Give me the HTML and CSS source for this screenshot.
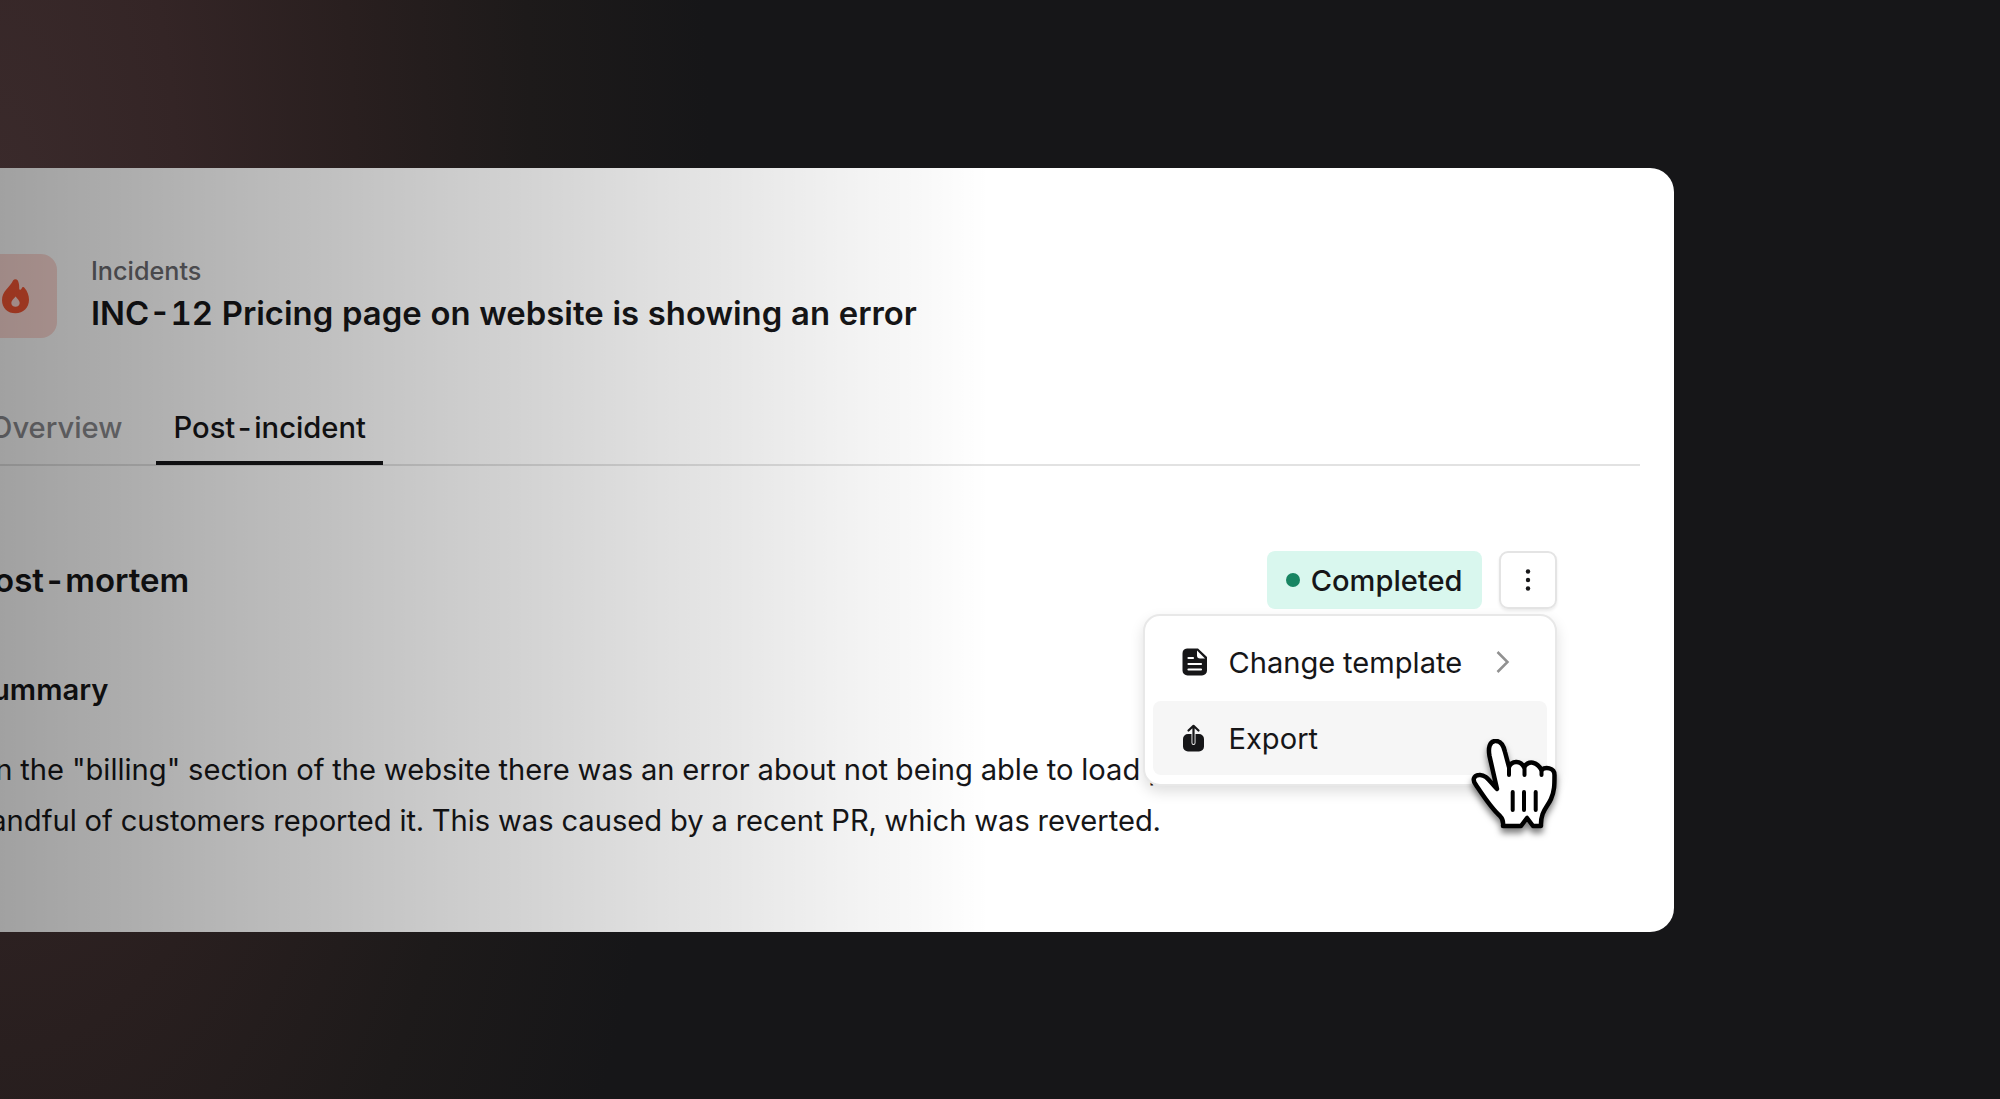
FILE: index.html
```
<!DOCTYPE html>
<html lang="en">
<head>
    <meta charset="UTF-8">
    <meta name="viewport" content="width=device-width, initial-scale=1.0">
    <title>INC-12 Pricing page on website is showing an error</title>
    <link rel="stylesheet" href="styles.css">
</head>
<body>
    <div class="card">
        <div class="header">
            <div class="header-icon">
                <svg width="27" height="35" viewBox="0 0 27 35" fill="#f25533">
                    <path fill-rule="evenodd" d="M11.2 1.2C12.3-.2 14.6-.1 15.8 1.4C16.9 3.4 17.3 6.200 17.200 9.400C17.200 10.800 18.700 11.100 19.300 10.100L20.200 8.500C21 7.800 22 8.100 22.600 8.900C25.400 12 27 16.200 27 20.800C27 28.600 21.300 34.300 13.500 34.300C5.700 34.300 0 28.900 0 21.200C0 16.800 1.800 13.600 4.300 10.600C7 7.400 9.500 4.800 11.200 1.200ZM13.600 17.600C12.100 19.300 9.300 21.800 9.300 24C9.300 26.200 11.200 27.700 13.500 27.700C15.800 27.700 17.700 26.200 17.700 24C17.700 21.800 15 19.300 13.600 17.600Z"/>
                </svg>
            </div>
            <div class="header-text">
                <div class="breadcrumb">Incidents</div>
                <h1>INC-12 Pricing page on website is showing an error</h1>
            </div>
        </div>

        <div class="tabs">
            <div class="tab">Overview</div>
            <div class="tab active">Post-incident</div>
        </div>

        <div class="content">
            <div class="title-row">
                <h2>Post-mortem</h2>
                <div class="actions">
                    <div class="badge"><span class="dot"></span>Completed</div>
                    <div class="more-btn">
                        <svg width="6" height="22" viewBox="0 0 6 22" fill="#161618">
                            <circle cx="3" cy="2.500" r="2.200"/>
                            <circle cx="3" cy="11" r="2.200"/>
                            <circle cx="3" cy="19.500" r="2.200"/>
                        </svg>
                    </div>
                    <div class="menu">
                        <div class="menu-item">
                            <svg class="menu-icon" width="26" height="28" viewBox="0 0 26 28">
                                <path fill="#161618" d="M5 .5H16L25 9V22.500A5 5 0 0 1 20 27.500H5.500A5 5 0 0 1 .5 22.500V5.500A5 5 0 0 1 5 .5Z"/>
                                <path fill="#fff" d="M15 2.500L23 10.500H18A3 3 0 0 1 15 7.500Z"/>
                                <path stroke="#fff" stroke-width="2.200" stroke-linecap="round" d="M6.500 10H11M6.500 16H19M6.500 21.500H19"/>
                            </svg>
                            Change template
                            <svg class="chevron" width="14" height="24" viewBox="0 0 14 24" fill="none" stroke="#919191" stroke-width="2.500">
                                <path d="M1.500 2L11.500 12L1.500 22"/>
                            </svg>
                        </div>
                        <div class="menu-item active">
                            <svg class="menu-icon" width="26" height="28" viewBox="0 0 26 28">
                                <path fill="#161618" d="M6 10H9.500V19A2 2 0 0 0 13.500 19V10H17A5 5 0 0 1 22 15V22.500A5 5 0 0 1 17 27.500H6A5 5 0 0 1 1 22.500V15A5 5 0 0 1 6 10Z"/>
                                <path fill="none" stroke="#161618" stroke-width="2.200" stroke-linecap="round" stroke-linejoin="round" d="M11.500 19V2M6.500 6.500L11.500 1.800L16.500 6.500"/>
                            </svg>
                            Export
                        </div>
                        <svg class="cursor" width="90" height="102" viewBox="0 0 90 102">
                            <path fill="#fff" stroke="#000" stroke-width="4.500" stroke-linejoin="round" d="M26 50L18.500 17C17 9 18.500 2.500 24 2C30 1.500 32.500 6 34 13L38 28C41 20.500 50 22 53 28C58 21 66 22.500 70.500 31C74 28 83.500 28 83.500 36C83.500 46 83.500 52 80 60C76 69 69.500 72 70 87H62L56 79L50 87H32C32.500 83 32 80 29 77C20 69 13 58 5 46C1 41 2.500 36.500 8 36C15 35 19 43 26 50Z"/>
                            <path fill="none" stroke="#000" stroke-width="4" stroke-linecap="round" d="M38 28V36M53.500 28V36M70.500 31V36M41.700 53V71M53 53V71M64.700 53V71"/>
                        </svg>
                    </div>
                </div>
            </div>
            <h3>Summary</h3>
            <p>On the "billing" section of the website there was an error about not being able to load prices. A<br>handful of customers reported it. This was caused by a recent PR, which was reverted.</p>
        </div>
    </div>
</body>
</html>
```
FILE: styles.css
```
* { margin: 0; padding: 0; box-sizing: border-box; }
body {
    height: 1099px;
    padding-top: 168px;
    overflow: hidden;
    font-family: Inter, "Liberation Sans", sans-serif;
    font-variant-numeric: tabular-nums;
    color: #161618;
    background: radial-gradient(ellipse 710px 1700px at 0 200px, #3a2a2b 0%, #342526 25%, #291f1f 50%, #1d1a1a 75%, #161618 100%) #161618;
}
.card {
    position: relative;
    width: 1773.5px;
    height: 764px;
    margin-left: -100px;
    padding: 86px 34px 0 73px;
    background: #fff;
    border-radius: 24px;
}
/* fades the left half of the card into the dark background */
.card::after {
    content: "";
    position: absolute;
    top: 0;
    bottom: 0;
    left: 100px;
    width: 990px;
    background: linear-gradient(to right, rgba(0, 0, 0, 0.37), rgba(0, 0, 0, 0));
}

.header { display: flex; align-items: center; gap: 34px; height: 84px; }
.header-icon { display: flex; align-items: center; justify-content: center; width: 84px; height: 84px; background: #fcd9d4; border-radius: 16px; }
.breadcrumb { font-size: 25.2px; line-height: 34px; font-weight: 500; color: #6a6a6f; }
h1 { font-size: 32.85px; line-height: 50px; font-weight: 600; white-space: nowrap; }

.tabs { display: flex; gap: 17px; height: 128px; align-items: flex-end; border-bottom: 2px solid #e2e2e2; }
.tab { height: 60px; margin-bottom: -1px; padding: 0 17px; font-size: 29.2px; line-height: 46px; font-weight: 500; color: #8a8a8e; }
.tab.active { color: #161618; border-bottom: 4px solid #161618; }

.content { padding: 85px 83px 0 0; }
.title-row { display: flex; align-items: center; justify-content: space-between; height: 58px; }
h2 { font-size: 33px; font-weight: 600; }
.actions { position: relative; display: flex; gap: 17px; }
.badge { display: flex; align-items: center; gap: 11px; height: 58px; padding: 0 19px; font-size: 29.1px; font-weight: 500; background: #d9f7ee; border-radius: 8px; }
.dot { width: 14px; height: 14px; background: #188562; border-radius: 50%; }
.more-btn { display: flex; align-items: center; justify-content: center; width: 58px; height: 58px; border: 2px solid #e4e4e4; border-radius: 9px; box-shadow: 0 2px 3px rgba(0, 0, 0, 0.08); }

.menu { position: absolute; z-index: 1; top: 63px; right: 0; width: 414px; height: 172px; padding: 9px 8px; background: #fff; border: 2px solid #e8e8e8; border-radius: 17px; box-shadow: 0 6px 14px rgba(0, 0, 0, 0.13); }
.menu-item { display: flex; align-items: center; height: 74px; margin-bottom: 2px; padding: 0 37px 0 29px; font-size: 29.1px; border-radius: 8px; }
.menu-item.active { background: #f6f6f6; }
.menu-icon { margin-right: 21px; }
.chevron { margin-left: auto; }
.cursor { position: absolute; left: 326px; top: 123px; filter: drop-shadow(0 5px 3px rgba(0, 0, 0, 0.5)); }

h3 { margin-top: 61px; font-size: 29.2px; line-height: 40px; font-weight: 600; }
p { margin-top: 35px; font-size: 29.15px; line-height: 50.500px; white-space: nowrap; }
```
